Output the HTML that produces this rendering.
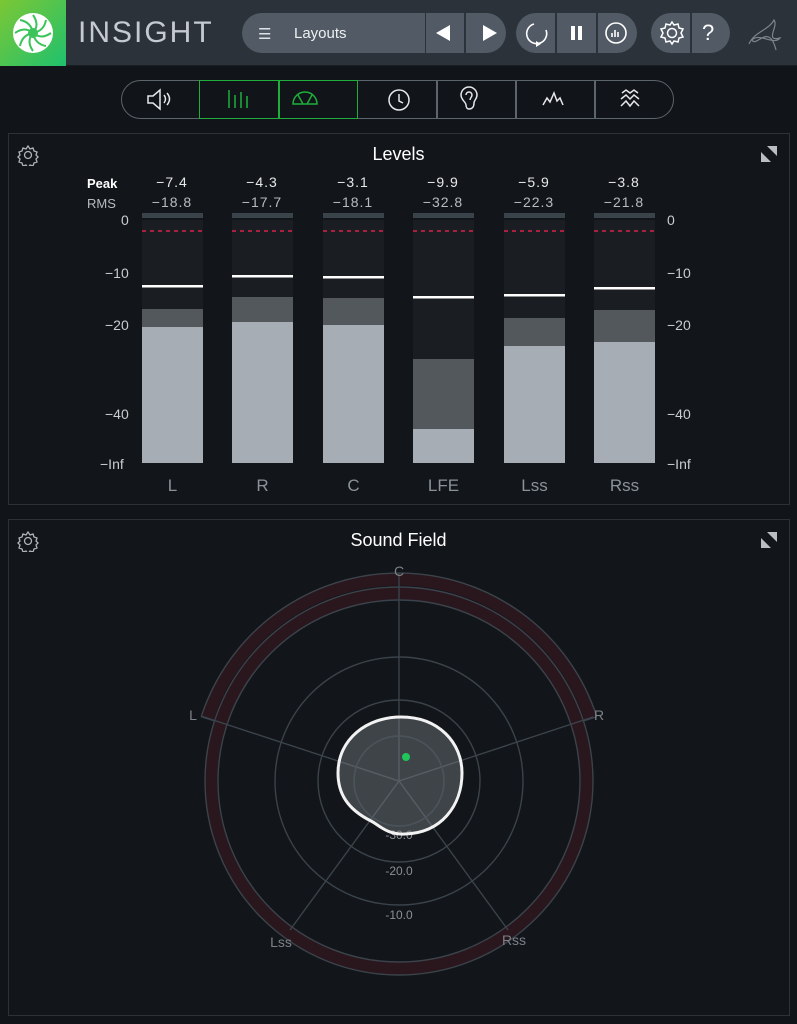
<!DOCTYPE html>
<html><head><meta charset="utf-8"><style>
*{margin:0;padding:0;box-sizing:border-box}
body{width:797px;height:1024px;background:#111418;font-family:"Liberation Sans",sans-serif;overflow:hidden;position:relative}
.abs{position:absolute}
.top{left:0;top:0;width:797px;height:66px;background:#2b323a;border-bottom:1px solid #1a1e22}
.logo{left:0;top:0;width:66px;height:66px;background:linear-gradient(135deg,#7cc734,#1fc16e)}
.pill{background:#525b65;height:40px;top:13px}
.panel{border:1px solid #2c3238;background:#121519}
.t{color:#fff;font-size:18px;text-align:center}
.num{color:#e8e8e8;font-size:14px;text-align:center;width:80px;letter-spacing:1px}
.rms{color:#b8bcc0}
.sc{color:#c9ccd0;font-size:14px}
.ch{color:#8a929a;font-size:17px;text-align:center;width:61px}
</style></head><body>
<div class="abs top"></div>
<div class="abs logo"><svg width="66" height="66"><circle cx="33" cy="33" r="20" fill="#fff"/><g stroke="#3cc35a" stroke-width="2" fill="none">
<path d="M33 15 Q40 25 33 33"/><path d="M46 20 Q44 31 33 33"/><path d="M51 33 Q41 40 33 33"/><path d="M46 46 Q35 44 33 33"/><path d="M33 51 Q26 41 33 33"/><path d="M20 46 Q22 35 33 33"/><path d="M15 33 Q25 26 33 33"/><path d="M20 20 Q31 22 33 33"/></g><circle cx="33" cy="33" r="5" fill="#3cc35a"/></svg></div>
<div class="abs" style="left:78px;top:16px;color:#c4cad0;font-size:30px;letter-spacing:2px;font-weight:300">INSIGHT</div>
<div class="abs pill" style="left:242px;width:183px;border-radius:20px 0 0 20px"></div>
<div class="abs" style="left:258px;top:25px;color:#e0e3e6;font-size:15px">☰</div>
<div class="abs" style="left:294px;top:25px;color:#eef0f2;font-size:15px">Layouts</div>
<div class="abs pill" style="left:426px;width:38px"></div>
<div class="abs pill" style="left:466px;width:40px;border-radius:0 20px 20px 0"></div>
<svg class="abs" style="left:426px;top:13px" width="80" height="40"><path d="M10 20 L24 12 L24 28Z M57 12 L71 20 L57 28Z" fill="#fff"/></svg>
<div class="abs pill" style="left:516px;width:39px;border-radius:20px 0 0 20px"></div>
<div class="abs pill" style="left:557px;width:39px"></div>
<div class="abs pill" style="left:598px;width:39px;border-radius:0 20px 20px 0"></div>
<svg class="abs" style="left:516px;top:13px" width="121" height="40" fill="none" stroke="#fff" stroke-width="1.6"><path d="M18 11 A10 10 0 1 0 30 17"/><path d="M20 28 L25 31 L20 34Z" fill="#fff" stroke="none"/><rect x="55" y="13" width="4" height="14" fill="#fff" stroke="none"/><rect x="62" y="13" width="4" height="14" fill="#fff" stroke="none"/><circle cx="100" cy="20" r="10"/><path d="M96 24v-4M99 24v-7M102 24v-5" /></svg>
<div class="abs pill" style="left:651px;width:39px;border-radius:20px 0 0 20px"></div>
<div class="abs pill" style="left:692px;width:38px;border-radius:0 20px 20px 0"></div>
<svg class="abs" style="left:651px;top:13px" width="80" height="40" fill="none" stroke="#fff" stroke-width="1.5"><circle cx="21" cy="20" r="4.5"/><path d="M21 9 L23 12 L27 11 L28 15 L32 16 L30 20 L32 24 L28 25 L27 29 L23 28 L21 31 L19 28 L15 29 L14 25 L10 24 L12 20 L10 16 L14 15 L15 11 L19 12Z"/></svg>
<div class="abs" style="left:702px;top:20px;color:#fff;font-size:22px">?</div>
<svg class="abs" style="left:744px;top:12px" width="42" height="42" fill="none" stroke="#7d848b" stroke-width="1.2"><path d="M5 32 C10 20 25 18 30 8 C35 14 20 30 36 26 C30 34 15 20 8 28 C12 36 25 10 32 38"/></svg>

<div class="abs" style="left:121px;top:80px;width:553px;height:39px;border:1.5px solid #5c646c;border-radius:20px"></div>
<div class="abs" style="left:199px;top:80px;width:159px;height:39px;border:1.5px solid #1fae3c"></div>
<div class="abs" style="left:278px;top:80px;width:1.5px;height:39px;background:#1fae3c"></div>
<div class="abs" style="left:436px;top:81px;width:1.5px;height:37px;background:#5c646c"></div>
<div class="abs" style="left:515px;top:81px;width:1.5px;height:37px;background:#5c646c"></div>
<div class="abs" style="left:594px;top:81px;width:1.5px;height:37px;background:#5c646c"></div>
<svg class="abs" style="left:121px;top:80px" width="553" height="39" fill="none" stroke="#e6e8ea" stroke-width="1.5">
<path d="M27 16h5l7-6v19l-7-6h-5z"/><path d="M43 15q3 4 0 8M46 13q5 6 0 12"/>
<g stroke="#1fae3c"><path d="M108 10v18M114 15v13M120 12v16M126 16v12"/><path d="M172 24 A11 11 0 0 1 196 24Z"/><path d="M182 24l-5-9M186 24l5-9"/></g>
<circle cx="278" cy="20" r="10"/><path d="M278 14v7l4 2"/>
<path d="M348 29c-2 0-3-2-3-4 0-3-5-5-5-10a8 8 0 0 1 16 0c0 4-3 5-3 8 0 4-2 6-5 6z"/><path d="M345 15a3 3 0 0 1 6 0c0 2-2 3-2 5"/>
<path d="M422 25l4-7 3 4 4-9 3 8 3-3 3 7"/>
<path d="M501 13l4-3 4 3 4-3 4 3M500 19l5-4 4 4 4-4 5 4M500 26l5-5 4 5 4-5 5 5"/>
</svg>

<div class="abs panel" style="left:8px;top:133px;width:782px;height:372px"></div>
<div class="abs t" style="left:0;width:797px;top:144px">Levels</div>
<svg class="abs" style="left:17px;top:144px" width="22" height="22" fill="none" stroke="#b0b5ba" stroke-width="1.3"><circle cx="11" cy="11" r="3.5"/><path d="M11 2l2 3 3-1 1 3 3 1-1 3 2 2-2 2 1 3-3 1-1 3-3-1-2 3-2-3-3 1-1-3-3-1 1-3-2-2 2-2-1-3 3-1 1-3 3 1z"/></svg>
<svg class="abs" style="left:758px;top:143px" width="22" height="22" fill="#b9bec3"><path d="M9 3h10v10z M3 9v10h10z"/></svg>
<div class="abs" style="left:87px;top:176px;color:#fff;font-size:13px;font-weight:bold">Peak</div>
<div class="abs" style="left:87px;top:196px;color:#b8bcc0;font-size:13px">RMS</div>
<div class="abs sc" style="left:121px;top:212px">0</div>
<div class="abs sc" style="left:105px;top:265px">−10</div>
<div class="abs sc" style="left:105px;top:317px">−20</div>
<div class="abs sc" style="left:105px;top:406px">−40</div>
<div class="abs sc" style="left:100px;top:456px">−Inf</div>
<div class="abs sc" style="left:667px;top:212px">0</div>
<div class="abs sc" style="left:667px;top:265px">−10</div>
<div class="abs sc" style="left:667px;top:317px">−20</div>
<div class="abs sc" style="left:667px;top:406px">−40</div>
<div class="abs sc" style="left:667px;top:456px">−Inf</div>
<svg class="abs" style="left:0;top:200px" width="797" height="270">
<defs><g id="bg"><rect y="13" width="61" height="5" fill="#3a424a"/><rect y="20" width="61" height="243" fill="#1a1e22"/><line x1="0" x2="61" y1="31" y2="31" stroke="#d9214a" stroke-width="1.5" stroke-dasharray="4 4"/></g></defs>
<g transform="translate(142,0)"><use href="#bg"/><rect y="109" width="61" height="18" fill="#53585d"/><rect y="127" width="61" height="136" fill="#a6adb5"/><rect y="85" width="61" height="2.5" fill="#fff"/></g>
<g transform="translate(232,0)"><use href="#bg"/><rect y="97" width="61" height="25" fill="#53585d"/><rect y="122" width="61" height="141" fill="#a6adb5"/><rect y="75" width="61" height="2.5" fill="#fff"/></g>
<g transform="translate(323,0)"><use href="#bg"/><rect y="98" width="61" height="27" fill="#53585d"/><rect y="125" width="61" height="138" fill="#a6adb5"/><rect y="76" width="61" height="2.5" fill="#fff"/></g>
<g transform="translate(413,0)"><use href="#bg"/><rect y="159" width="61" height="70" fill="#53585d"/><rect y="229" width="61" height="34" fill="#a6adb5"/><rect y="96" width="61" height="2.5" fill="#fff"/></g>
<g transform="translate(504,0)"><use href="#bg"/><rect y="118" width="61" height="28" fill="#53585d"/><rect y="146" width="61" height="117" fill="#a6adb5"/><rect y="94" width="61" height="2.5" fill="#fff"/></g>
<g transform="translate(594,0)"><use href="#bg"/><rect y="110" width="61" height="32" fill="#53585d"/><rect y="142" width="61" height="121" fill="#a6adb5"/><rect y="87" width="61" height="2.5" fill="#fff"/></g>
</svg>
<div class="abs num" style="left:132px;top:174px">−7.4</div><div class="abs num rms" style="left:132px;top:194px">−18.8</div>
<div class="abs num" style="left:222px;top:174px">−4.3</div><div class="abs num rms" style="left:222px;top:194px">−17.7</div>
<div class="abs num" style="left:313px;top:174px">−3.1</div><div class="abs num rms" style="left:313px;top:194px">−18.1</div>
<div class="abs num" style="left:403px;top:174px">−9.9</div><div class="abs num rms" style="left:403px;top:194px">−32.8</div>
<div class="abs num" style="left:494px;top:174px">−5.9</div><div class="abs num rms" style="left:494px;top:194px">−22.3</div>
<div class="abs num" style="left:584px;top:174px">−3.8</div><div class="abs num rms" style="left:584px;top:194px">−21.8</div>
<div class="abs ch" style="left:142px;top:476px">L</div>
<div class="abs ch" style="left:232px;top:476px">R</div>
<div class="abs ch" style="left:323px;top:476px">C</div>
<div class="abs ch" style="left:413px;top:476px">LFE</div>
<div class="abs ch" style="left:504px;top:476px">Lss</div>
<div class="abs ch" style="left:594px;top:476px">Rss</div>

<div class="abs panel" style="left:8px;top:519px;width:782px;height:497px"></div>
<div class="abs t" style="left:0;width:797px;top:530px">Sound Field</div>
<svg class="abs" style="left:17px;top:530px" width="22" height="22" fill="none" stroke="#b0b5ba" stroke-width="1.3"><circle cx="11" cy="11" r="3.5"/><path d="M11 2l2 3 3-1 1 3 3 1-1 3 2 2-2 2 1 3-3 1-1 3-3-1-2 3-2-3-3 1-1-3-3-1 1-3-2-2 2-2-1-3 3-1 1-3 3 1z"/></svg>
<svg class="abs" style="left:758px;top:529px" width="22" height="22" fill="#b9bec3"><path d="M9 3h10v10z M3 9v10h10z"/></svg>
<svg class="abs" style="left:0;top:0" width="797" height="1024" font-family="Liberation Sans, sans-serif">
<g transform="translate(399,781)">
<circle r="187.5" fill="none" stroke="#2a161d" stroke-width="13"/>
<path d="M-191.8 -62.3 A201.5 201.5 0 0 1 191.8 -62.3" fill="none" stroke="#2a161d" stroke-width="13"/>
<g fill="none" stroke="#3a434b" stroke-width="1.4">
<path d="M-197.8 -64.3 A208 208 0 0 1 197.8 -64.3"/>
<path d="M-197.8 -64.3 L-184.5 -60 M197.8 -64.3 L184.5 -60"/>
<circle r="194"/><circle r="181"/><circle r="124"/><circle r="81"/><circle r="45"/>
<line x1="0" y1="0" x2="0" y2="-208"/><line x1="0" y1="0" x2="-198" y2="-65"/><line x1="0" y1="0" x2="194" y2="-64"/><line x1="0" y1="0" x2="-109" y2="149"/><line x1="0" y1="0" x2="109" y2="149"/>
</g>
<text x="0" y="58" fill="#8a9096" font-size="12" text-anchor="middle">-30.0</text>
<text x="0" y="94" fill="#8a9096" font-size="12" text-anchor="middle">-20.0</text>
<text x="0" y="138" fill="#8a9096" font-size="12" text-anchor="middle">-10.0</text>
<text x="0" y="-205" fill="#7b8288" font-size="14" text-anchor="middle">C</text>
<text x="-206" y="-61" fill="#7b8288" font-size="14" text-anchor="middle">L</text>
<text x="200" y="-61" fill="#7b8288" font-size="14" text-anchor="middle">R</text>
<text x="-118" y="166" fill="#7b8288" font-size="14" text-anchor="middle">Lss</text>
<text x="115" y="164" fill="#7b8288" font-size="14" text-anchor="middle">Rss</text>
<path d="M2 -64 C40 -64 63 -38 63 -8 C63 25 42 52 6 53 C-12 54 -20 44 -28 40 C-52 28 -61 12 -61 -8 C-61 -42 -32 -64 2 -64Z" fill="rgba(120,126,132,0.45)" stroke="#f2f2f2" stroke-width="3"/>
<g fill="none" stroke="#4a535b" stroke-width="1.3"><circle r="45"/></g>
<circle cx="7" cy="-24" r="4" fill="#1fc45a"/>
</g>
</svg>
</body></html>
